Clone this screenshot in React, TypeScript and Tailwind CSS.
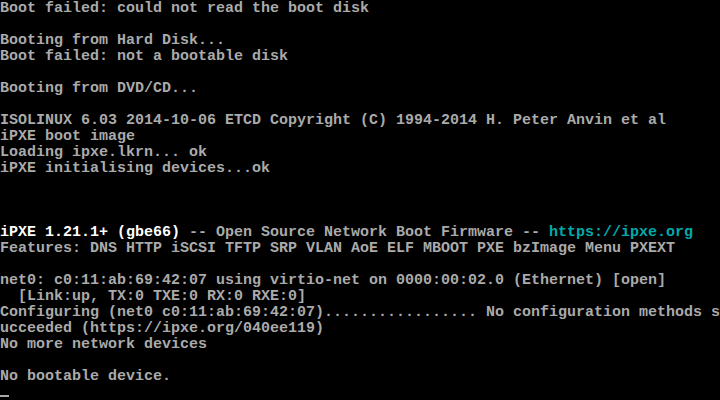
import React from "react";

const GRAY = "text-[#aaaaaa]";

const lines: string[] = [
  "Boot failed: could not read the boot disk",
  "",
  "Booting from Hard Disk...",
  "Boot failed: not a bootable disk",
  "",
  "Booting from DVD/CD...",
  "",
  "ISOLINUX 6.03 2014-10-06 ETCD Copyright (C) 1994-2014 H. Peter Anvin et al",
  "iPXE boot image",
  "Loading ipxe.lkrn... ok",
  "iPXE initialising devices...ok",
  "",
  "",
  "",
];

const tail: string[] = [
  "Features: DNS HTTP iSCSI TFTP SRP VLAN AoE ELF MBOOT PXE bzImage Menu PXEXT",
  "",
  "net0: c0:11:ab:69:42:07 using virtio-net on 0000:00:02.0 (Ethernet) [open]",
  "  [Link:up, TX:0 TXE:0 RX:0 RXE:0]",
  "Configuring (net0 c0:11:ab:69:42:07)................. No configuration methods s",
  "ucceeded (https://ipxe.org/040ee119)",
  "No more network devices",
  "",
  "No bootable device.",
];

const Row = ({ children }: { children?: React.ReactNode }) => (
  <div className="h-4 whitespace-pre pt-px">{children || " "}</div>
);

export default function App() {
  return (
    <div
      className={`w-[720px] h-[400px] overflow-hidden bg-black ${GRAY} text-[15px] leading-4 font-bold`}
      style={{ fontFamily: '"Liberation Mono", "DejaVu Sans Mono", monospace' }}
    >
      {lines.map((l, i) => (
        <Row key={"a" + i}>{l}</Row>
      ))}
      <Row>
        <span className="text-white">iPXE 1.21.1+ (gbe66)</span>
        <span> -- Open Source Network Boot Firmware -- </span>
        <span className="text-[#00aaaa]">https://ipxe.org</span>
      </Row>
      {tail.map((l, i) => (
        <Row key={"b" + i}>{l}</Row>
      ))}
      <div className="h-4 flex items-end">
        <div className="w-[9px] h-[2px] mb-[3px] bg-[#aaaaaa]" />
      </div>
    </div>
  );
}
